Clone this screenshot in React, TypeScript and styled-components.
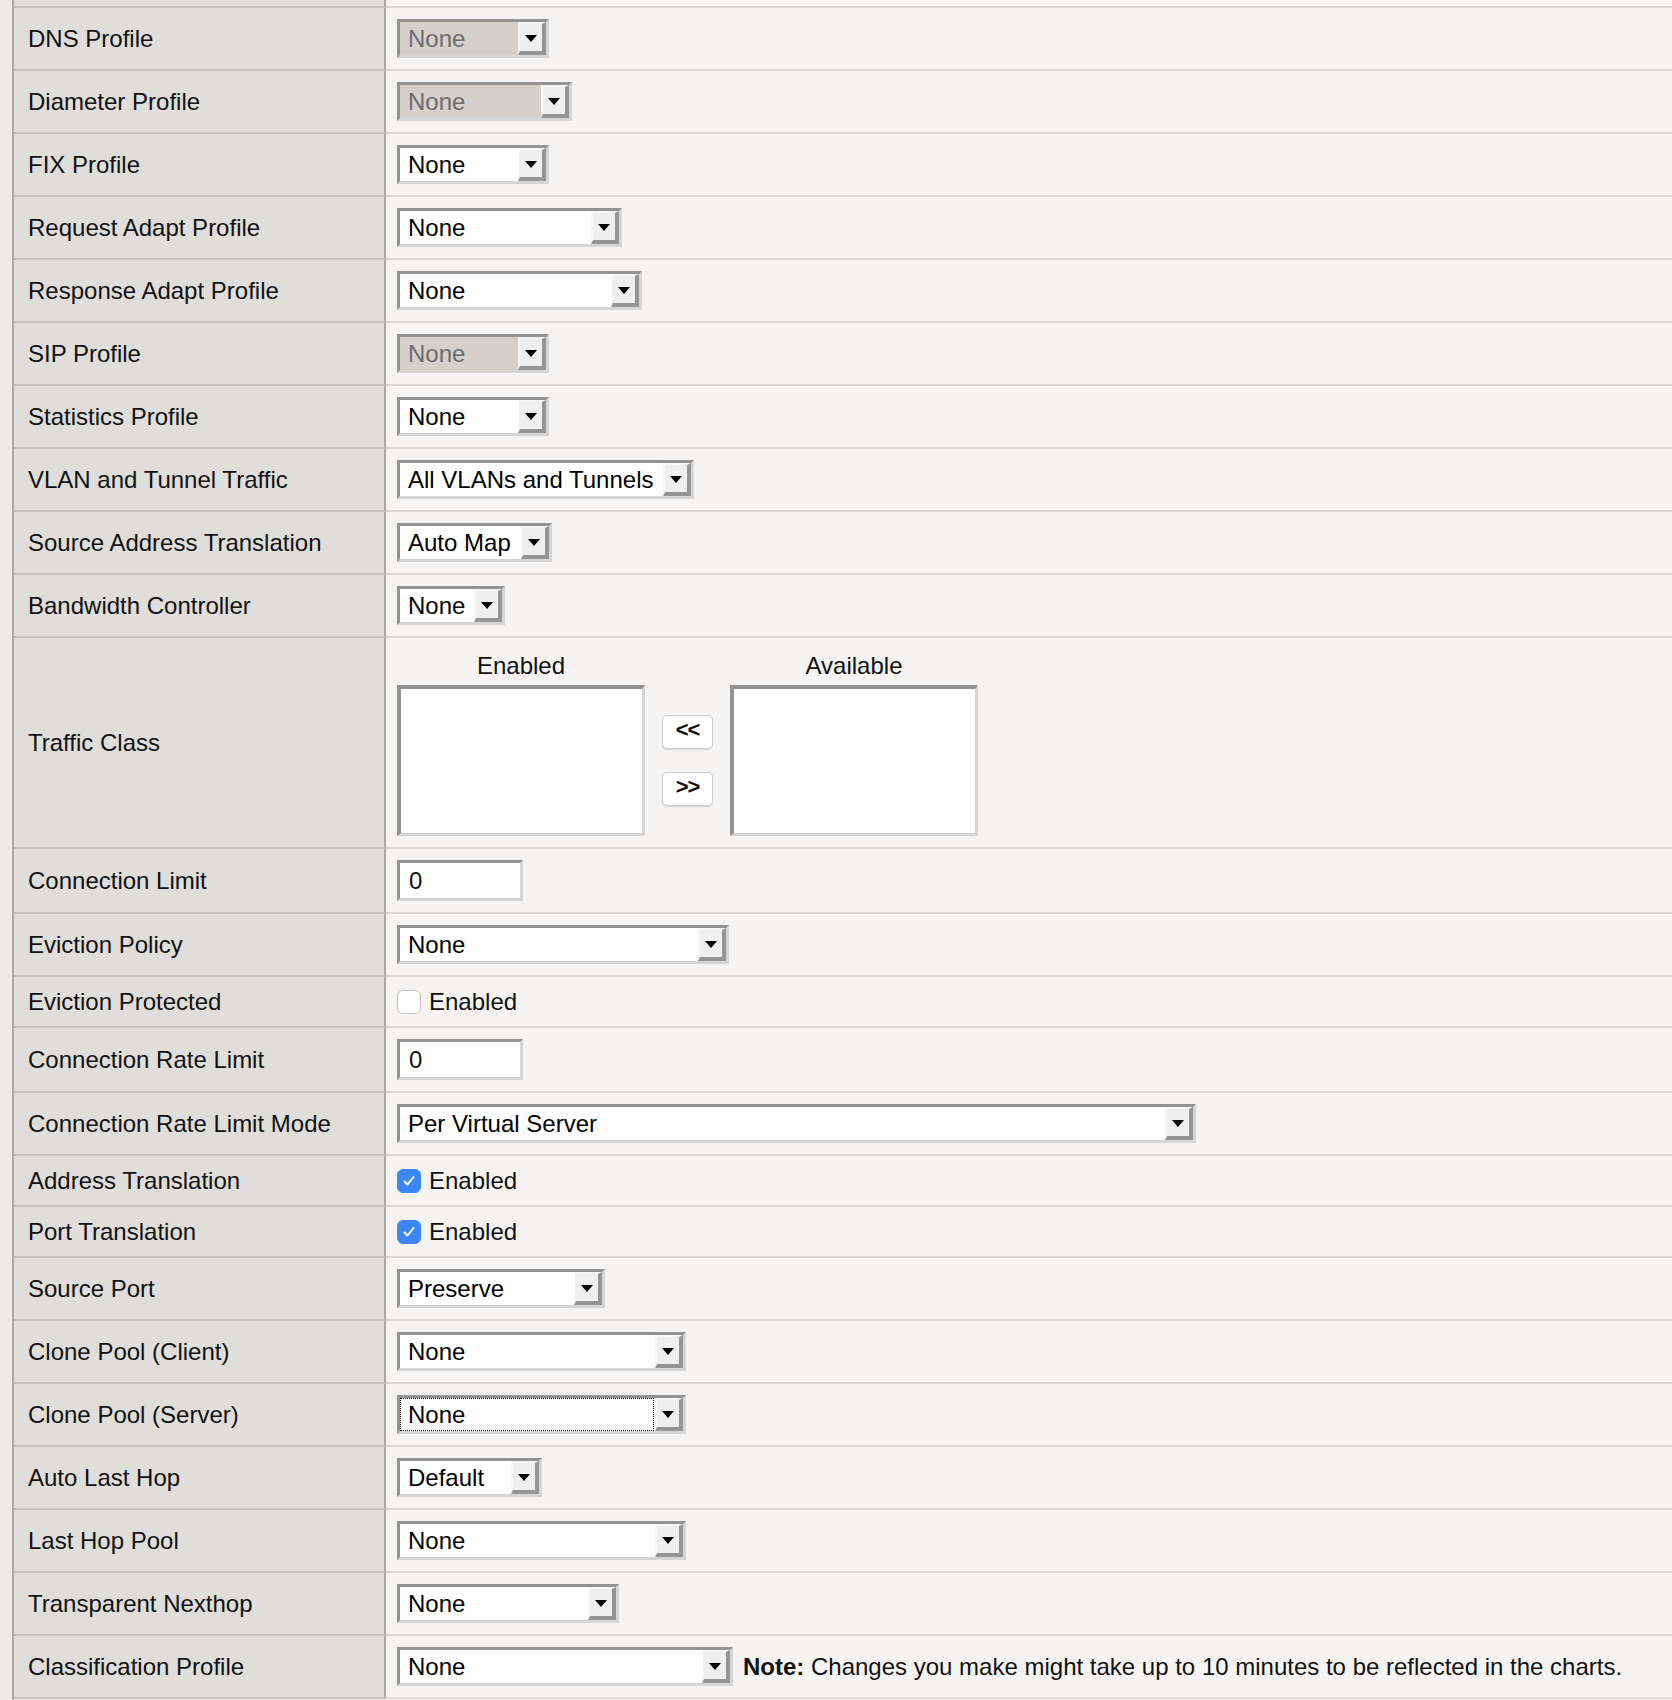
import React from 'react';
import styled, { createGlobalStyle } from 'styled-components';

// Estilos globales de la página
const GlobalStyle = createGlobalStyle`
  body {
    margin: 0;
    background: #f5f4f2;
    font-family: "Liberation Sans", Arial, Helvetica, sans-serif;
    color: #111;
  }
`;

type SelectRow = { kind: 'select'; label: string; value: string; width: number; disabled?: boolean; focused?: boolean; note?: boolean };
type InputRow = { kind: 'input'; label: string; value: string };
type CheckRow = { kind: 'check'; label: string; checked: boolean };
type ListRow = { kind: 'lists'; label: string };
type FieldRow = SelectRow | InputRow | CheckRow | ListRow;

// Filas del formulario, en el orden de la pantalla
const rows: FieldRow[] = [
  { kind: 'select', label: 'DNS Profile', value: 'None', width: 152, disabled: true },
  { kind: 'select', label: 'Diameter Profile', value: 'None', width: 175, disabled: true },
  { kind: 'select', label: 'FIX Profile', value: 'None', width: 152 },
  { kind: 'select', label: 'Request Adapt Profile', value: 'None', width: 225 },
  { kind: 'select', label: 'Response Adapt Profile', value: 'None', width: 245 },
  { kind: 'select', label: 'SIP Profile', value: 'None', width: 152, disabled: true },
  { kind: 'select', label: 'Statistics Profile', value: 'None', width: 152 },
  { kind: 'select', label: 'VLAN and Tunnel Traffic', value: 'All VLANs and Tunnels', width: 297 },
  { kind: 'select', label: 'Source Address Translation', value: 'Auto Map', width: 155 },
  { kind: 'select', label: 'Bandwidth Controller', value: 'None', width: 108 },
  { kind: 'lists', label: 'Traffic Class' },
  { kind: 'input', label: 'Connection Limit', value: '0' },
  { kind: 'select', label: 'Eviction Policy', value: 'None', width: 332 },
  { kind: 'check', label: 'Eviction Protected', checked: false },
  { kind: 'input', label: 'Connection Rate Limit', value: '0' },
  { kind: 'select', label: 'Connection Rate Limit Mode', value: 'Per Virtual Server', width: 799 },
  { kind: 'check', label: 'Address Translation', checked: true },
  { kind: 'check', label: 'Port Translation', checked: true },
  { kind: 'select', label: 'Source Port', value: 'Preserve', width: 208 },
  { kind: 'select', label: 'Clone Pool (Client)', value: 'None', width: 289 },
  { kind: 'select', label: 'Clone Pool (Server)', value: 'None', width: 289, focused: true },
  { kind: 'select', label: 'Auto Last Hop', value: 'Default', width: 145 },
  { kind: 'select', label: 'Last Hop Pool', value: 'None', width: 289 },
  { kind: 'select', label: 'Transparent Nexthop', value: 'None', width: 222 },
  { kind: 'select', label: 'Classification Profile', value: 'None', width: 336, note: true },
];

// Altura de la celda según el tipo de fila
const rowHeight = (row: FieldRow) => {
  switch (row.kind) {
    case 'lists':
      return 209;
    case 'input':
      return 63;
    case 'check':
      return 49;
    default:
      return 61;
  }
};

const App: React.FC = () => {
  return (
    <>
      <GlobalStyle />
      <Page>
        <Strip />
        <Table>
          <Row>
            <LabelCell $h={6} />
            <ValueCell $h={6} />
          </Row>
          {rows.map(row => (
            <Row key={row.label}>
              <LabelCell $h={rowHeight(row)}>{row.label}</LabelCell>
              <ValueCell $h={rowHeight(row)}>
                {row.kind === 'select' && (
                  <>
                    <SelectBox $width={row.width} $disabled={!!row.disabled}>
                      <SelectText $focused={!!row.focused}>{row.value}</SelectText>
                      <DropButton>
                        <Arrow />
                      </DropButton>
                    </SelectBox>
                    {row.note && (
                      <Note>
                        <b>Note:</b> Changes you make might take up to 10 minutes to be reflected in the charts.
                      </Note>
                    )}
                  </>
                )}
                {row.kind === 'input' && <TextBox>{row.value}</TextBox>}
                {row.kind === 'check' && (
                  <CheckLabel>
                    <CheckBox $checked={row.checked}>
                      {row.checked && (
                        <svg width="14" height="14" viewBox="0 0 14 14">
                          <path d="M2.5 7.5 L5.5 10.5 L11.5 3" fill="none" stroke="#fff" strokeWidth="2" strokeLinecap="round" strokeLinejoin="round" />
                        </svg>
                      )}
                    </CheckBox>
                    Enabled
                  </CheckLabel>
                )}
                {row.kind === 'lists' && (
                  <ListGroup>
                    <ListColumn>
                      <ListTitle>Enabled</ListTitle>
                      <ListBox />
                    </ListColumn>
                    <MoveButtons>
                      <MoveButton>&lt;&lt;</MoveButton>
                      <MoveButton>&gt;&gt;</MoveButton>
                    </MoveButtons>
                    <ListColumn>
                      <ListTitle>Available</ListTitle>
                      <ListBox />
                    </ListColumn>
                  </ListGroup>
                )}
              </ValueCell>
            </Row>
          ))}
        </Table>
      </Page>
    </>
  );
};

// Contenedor de la página con la franja izquierda
const Page = styled.div`
  display: flex;
  width: 100%;
  min-height: 100vh;
`;

const Strip = styled.div`
  width: 12px;
  flex: none;
  background: #ecebe8;
`;

const Table = styled.div`
  flex: 1;
  border-left: 2px solid #a9a9a7;
`;

const Row = styled.div`
  display: grid;
  grid-template-columns: 372px 1fr;
`;

const LabelCell = styled.div<{ $h: number }>`
  height: ${p => p.$h}px;
  display: flex;
  align-items: center;
  padding-left: 14px;
  background: #dfdedb;
  border-right: 2px solid #a9a9a7;
  border-bottom: 2px solid #c3c2be;
  font-size: 24px;
`;

const ValueCell = styled.div<{ $h: number }>`
  height: ${p => p.$h}px;
  display: flex;
  align-items: center;
  padding-left: 11px;
  background: #f5f4f2;
  border-bottom: 2px solid #d9d8d4;
  font-size: 24px;
`;

// Desplegable con aspecto clásico en relieve
const SelectBox = styled.div<{ $width: number; $disabled: boolean }>`
  display: flex;
  width: ${p => p.$width}px;
  height: 39px;
  box-sizing: border-box;
  border-style: solid;
  border-width: 3px;
  border-color: #939393 #d5d5d5 #d5d5d5 #939393;
  background: ${p => (p.$disabled ? '#d5d1ca' : '#fff')};
  color: ${p => (p.$disabled ? '#6d6d6d' : '#000')};
  flex: none;
`;

const SelectText = styled.div<{ $focused: boolean }>`
  flex: 1;
  display: flex;
  align-items: center;
  padding-left: 7px;
  margin: 1px 2px 1px 1px;
  font-size: 24px;
  white-space: nowrap;
  overflow: hidden;
  outline: ${p => (p.$focused ? '1px dotted #000' : 'none')};
`;

const DropButton = styled.div`
  width: 28px;
  flex: none;
  box-sizing: border-box;
  display: flex;
  align-items: center;
  justify-content: center;
  background: #efefef;
  border-style: solid;
  border-width: 2px 4px 4px 2px;
  border-color: #f6f6f6 #959595 #959595 #f6f6f6;
`;

const Arrow = styled.div`
  width: 0;
  height: 0;
  margin-top: 2px;
  border-left: 6px solid transparent;
  border-right: 6px solid transparent;
  border-top: 7px solid #000;
`;

const Note = styled.span`
  margin-left: 10px;
  font-size: 24px;
  white-space: nowrap;

  b {
    font-weight: bold;
  }
`;

// Caja de texto numérica
const TextBox = styled.div`
  width: 126px;
  height: 41px;
  box-sizing: border-box;
  display: flex;
  align-items: center;
  padding-left: 9px;
  background: #fff;
  border-style: solid;
  border-width: 3px;
  border-color: #939393 #d5d5d5 #d5d5d5 #939393;
  font-size: 24px;
`;

// Casilla de verificación
const CheckLabel = styled.label`
  display: flex;
  align-items: center;
  gap: 8px;
  font-size: 24px;
`;

const CheckBox = styled.span<{ $checked: boolean }>`
  width: 24px;
  height: 24px;
  box-sizing: border-box;
  border-radius: 6px;
  display: flex;
  align-items: center;
  justify-content: center;
  background: ${p => (p.$checked ? '#3b87f5' : '#fff')};
  border: 1px solid ${p => (p.$checked ? '#3b87f5' : '#c2c2c2')};
`;

// Selector doble de Traffic Class
const ListGroup = styled.div`
  display: flex;
  align-items: flex-end;
  gap: 17px;
  padding-top: 2px;
`;

const ListColumn = styled.div`
  display: flex;
  flex-direction: column;
  align-items: center;
`;

const ListTitle = styled.div`
  font-size: 24px;
  line-height: 28px;
  margin-bottom: 5px;
`;

const ListBox = styled.div`
  width: 248px;
  height: 151px;
  box-sizing: border-box;
  background: #fff;
  border-style: solid;
  border-width: 4px 3px 3px 4px;
  border-color: #939393 #d5d5d5 #d5d5d5 #939393;
`;

const MoveButtons = styled.div`
  height: 151px;
  display: flex;
  flex-direction: column;
  justify-content: center;
  gap: 23px;
`;

const MoveButton = styled.button`
  width: 51px;
  height: 34px;
  padding: 0 0 3px;
  background: #fff;
  border: 1px solid #cfcfcf;
  border-radius: 5px;
  box-shadow: 0 1px 1px rgba(0, 0, 0, 0.12);
  font-family: "Liberation Sans", Arial, sans-serif;
  font-size: 22px;
  font-weight: bold;
  color: #111;
  letter-spacing: -1px;
`;

export default App;
